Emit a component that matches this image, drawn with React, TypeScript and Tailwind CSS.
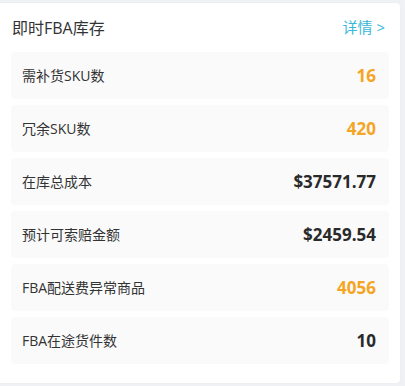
import React from "react";

type Row = {
  label: string;
  value: string;
  tone: "orange" | "dark";
};

const rows: Row[] = [
  { label: "需补货SKU数", value: "16", tone: "orange" },
  { label: "冗余SKU数", value: "420", tone: "orange" },
  { label: "在库总成本", value: "$37571.77", tone: "dark" },
  { label: "预计可索赔金额", value: "$2459.54", tone: "dark" },
  { label: "FBA配送费异常商品", value: "4056", tone: "orange" },
  { label: "FBA在途货件数", value: "10", tone: "dark" },
];

const StatRow = ({ label, value, tone }: Row) => {
  return (
    <div className="flex h-[47px] items-center justify-between rounded-sm bg-[#fafafa] pl-[11px] pr-[13px]">
      <span className="text-[14px] text-[#333333]">{label}</span>
      <span
        className={
          tone === "orange"
            ? "text-[17px] font-bold text-[#f5a524]"
            : "text-[17px] font-bold text-[#2a2a2a]"
        }
      >
        {value}
      </span>
    </div>
  );
};

export default function App() {
  return (
    <div
      className="h-[386px] w-[405px] bg-[#f0f1f5] pt-[3px]"
      style={{ fontFamily: '"Open Sans", "Noto Sans CJK SC", sans-serif' }}
    >
      <div className="h-[380px] w-[400px] rounded-r-sm bg-white shadow-[0_0_2px_rgba(0,0,0,0.06)]">
        {/* header */}
        <div className="flex h-[49px] items-center justify-between pl-[12px] pr-[15px]">
          <h2 className="text-[16px] text-[#333333]">即时FBA库存</h2>
          <a className="text-[15px] text-[#36b8d8]">详情 &gt;</a>
        </div>
        <div className="flex flex-col gap-[6px] px-[11px]">
          {rows.map((row, index) => (
            <StatRow key={index} {...row} />
          ))}
        </div>
      </div>
    </div>
  );
}
